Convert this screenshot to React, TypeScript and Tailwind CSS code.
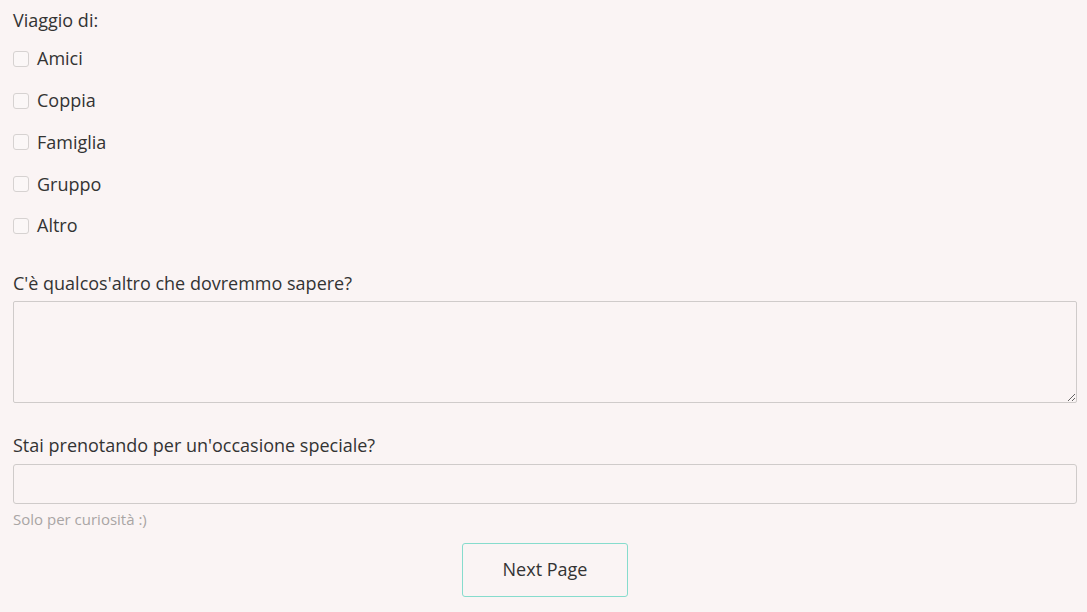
export default function App() {
  const options = ["Amici", "Coppia", "Famiglia", "Gruppo", "Altro"];
  return (
    <div
      className="min-h-[612px] w-full bg-[#faf4f4] text-[#333333] pl-[13px] pr-[10px] pt-[8px]"
      style={{ fontFamily: '"Open Sans", sans-serif' }}
    >
      <div className="text-[18px] leading-[24px]">Viaggio di:</div>
      <div className="mt-[6px] flex flex-col">
        {options.map((o) => (
          <label key={o} className="flex h-[41.75px] items-center gap-[8px] text-[18px]">
            <span className="h-[16px] w-[16px] rounded-[3px] border border-[#d6d2d1] bg-[#fbf7f7]" />
            <span>{o}</span>
          </label>
        ))}
      </div>
      <div className="mt-[24px] text-[18px] leading-[24px]">C'è qualcos'altro che dovremmo sapere?</div>
      <textarea className="mt-[6px] block h-[102px] w-full rounded-[2px] border border-[#cfcbca] bg-[#faf4f4] outline-none" />
      <div className="mt-[30px] text-[18px] leading-[24px]">Stai prenotando per un'occasione speciale?</div>
      <input className="mt-[7px] block h-[40px] w-full rounded-[3px] border border-[#cfcbca] bg-[#faf4f4] outline-none" />
      <div className="mt-[5px] text-[15px] leading-[20px] text-[#a9a5a4]">Solo per curiosità :)</div>
      <div className="mt-[14px] flex justify-center">
        <button className="h-[54px] w-[166px] rounded-[3px] border border-[#86dccd] bg-[#faf4f4] text-[18px] text-[#333333]">
          Next Page
        </button>
      </div>
    </div>
  );
}
